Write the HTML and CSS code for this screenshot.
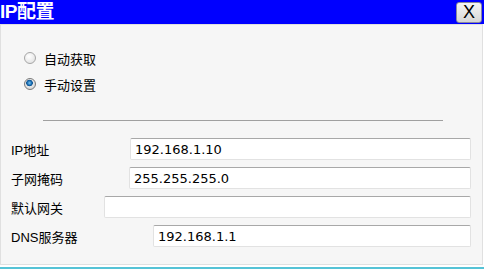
FILE: index.html
```html
<html>
<head>
<meta charset="utf-8">
<title>IP配置</title>
<link rel="stylesheet" href="styles.css">
</head>
<body>
<div id="dialog">
	<div class="titlebar">
		<span class="title">IP配置</span>
		<button class="closeBtn">X</button>
	</div>
	<div class="panel">
		<label class="choice"><input type="radio" name="mode" class="radio"> 自动获取</label>
		<label class="choice"><input type="radio" name="mode" class="radio" checked> 手动设置</label>
		<div class="divider"></div>
		<div class="field fieldIp"><span class="fieldLabel">IP地址</span><input class="textBox" value="192.168.1.10"></div>
		<div class="field fieldMask"><span class="fieldLabel">子网掩码</span><input class="textBox" value="255.255.255.0"></div>
		<div class="field fieldGate"><span class="fieldLabel">默认网关</span><input class="textBox" value=""></div>
		<div class="field fieldDns"><span class="fieldLabel">DNS服务器</span><input class="textBox" value="192.168.1.1"></div>
	</div>
	<div class="statusLine"></div>
</div>
</body>
</html>
```

FILE: styles.css
```css
*
{
	box-sizing: border-box;
}
body
{
	margin: 0;
	background-color: #ffffff;
	overflow: hidden;
	font-family: "Liberation Sans", "Noto Sans CJK SC", sans-serif;
}
#dialog
{
	width: 484px;
	height: 269px;
}
.titlebar
{
	display: flex;
	align-items: center;
	justify-content: space-between;
	height: 24px;
	padding-right: 2px;
	background-color: #0000ff;
}
.title
{
	color: #ffffff;
	font-size: 19px;
	font-weight: bold;
	line-height: 24px;
	letter-spacing: -0.5px;
}
.closeBtn
{
	width: 26px;
	height: 21px;
	margin-top: 1px;
	padding: 0;
	border: 1px solid #8a8a9a;
	border-radius: 3px;
	background: linear-gradient(#f4f4f4, #e6e6e6 50%, #d6d6d6);
	color: #000000;
	font-family: "Liberation Sans", sans-serif;
	font-size: 18px;
	line-height: 19px;
}
.panel
{
	display: flex;
	flex-direction: column;
	width: 483px;
	height: 241px;
	padding: 20px 11px 0 10px;
	border: 1px solid #e0e0e0;
	background-color: #f6f6f6;
}
.choice
{
	display: flex;
	align-items: center;
	height: 26px;
	padding-left: 13px;
	font-size: 13px;
	color: #000000;
}
.radio
{
	appearance: none;
	-webkit-appearance: none;
	width: 12px;
	height: 12px;
	margin: 0 8px 0 0;
	border: 1px solid #a6a6a6;
	border-radius: 50%;
	background: radial-gradient(circle at 40% 35%, #ffffff, #dcdcdc);
}
.radio:checked
{
	border-color: #7a7a7a;
	background: radial-gradient(circle at 45% 40%, #7fc4ef 0, #1d74b8 2px, #0b4f8e 3px, #e8e8e8 3.6px, #c8c8c8);
}
.divider
{
	width: 400px;
	height: 1px;
	margin: 23px 0 17px 32px;
	background-color: #a0a0a0;
}
.field
{
	display: flex;
	align-items: center;
	justify-content: space-between;
	height: 22px;
	margin-bottom: 7px;
}
.fieldLabel
{
	font-size: 13px;
	color: #000000;
}
.textBox
{
	height: 22px;
	padding: 0 4px;
	border: 1px solid #e2e2e2;
	border-top-color: #a8a8a8;
	border-radius: 2px;
	background-color: #ffffff;
	font-family: "DejaVu Sans", sans-serif;
	font-size: 13px;
	color: #000000;
}
.fieldIp .textBox { width: 341px; }
.fieldMask .textBox { width: 342px; }
.fieldGate .textBox { width: 367px; }
.fieldDns .textBox { width: 318px; }
.statusLine
{
	height: 2px;
	margin-top: 2px;
	background-color: #55c3d6;
}
```
